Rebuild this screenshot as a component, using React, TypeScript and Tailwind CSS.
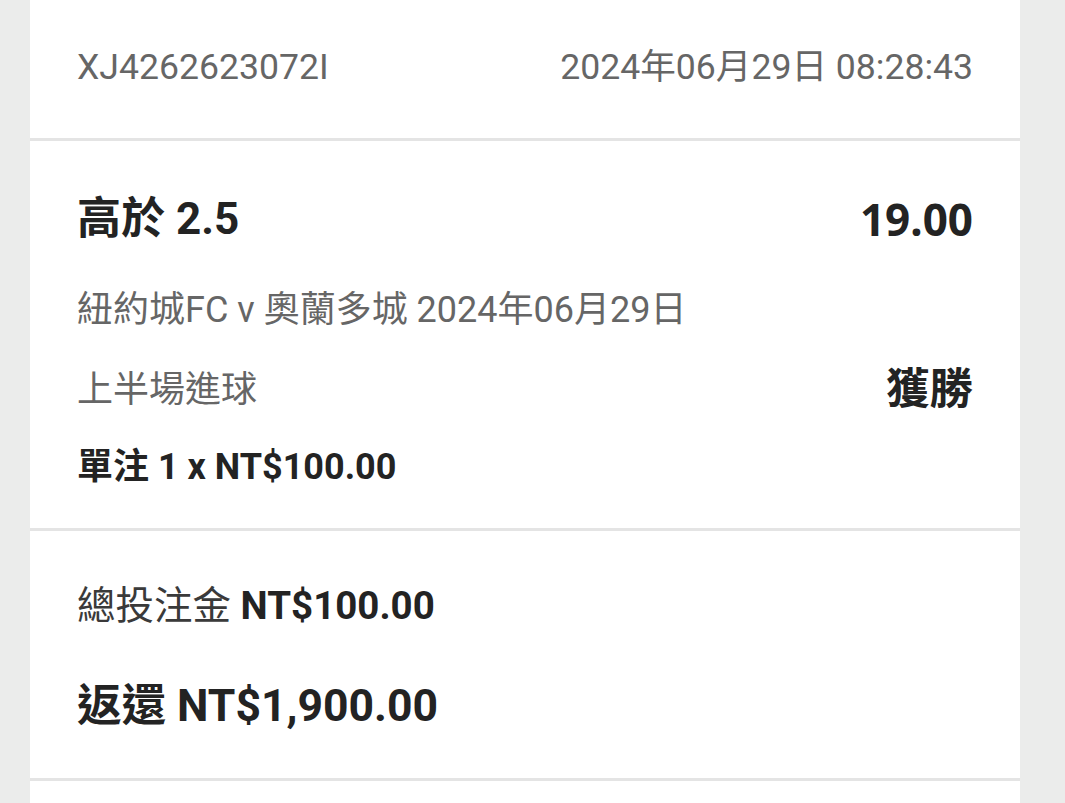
import React from "react";

const font = { fontFamily: "Roboto, 'Noto Sans CJK TC', sans-serif" };

function Divider() {
  return <div className="h-[3px] bg-[#e4e4e4]" />;
}

export default function App() {
  return (
    <div className="min-h-[803px] bg-[#ebeceb] px-[30px] pr-[45px]" style={font}>
      <div className="bg-white w-[990px]">
        <div className="flex items-center justify-between h-[138px] px-[47px] pb-[2px] text-[35.6px] text-[#666666]">
          <span>XJ4262623072I</span>
          <span>2024年06月29日 08:28:43</span>
        </div>
        <Divider />
        <div className="px-[47px] pt-[35px] pb-[20px]">
          <div className="flex items-center justify-between h-[86px]">
            <span className="text-[44px] font-bold text-[#232323]">高於 2.5</span>
            <span
              className="text-[44px] font-bold text-[#232323]"
              style={{ fontFamily: "'Noto Sans', 'Open Sans', sans-serif" }}
            >
              19.00
            </span>
          </div>
          <div className="flex items-center h-[92px] pt-[4px] text-[36px] text-[#666666]">
            紐約城FC v 奧蘭多城 2024年06月29日
          </div>
          <div className="flex items-center justify-between h-[72px]">
            <span className="text-[36px] text-[#666666]">上半場進球</span>
            <span className="text-[43.5px] font-bold text-[#232323]">獲勝</span>
          </div>
          <div className="flex items-center h-[82px] text-[36px] font-bold text-[#232323]">
            單注 1 x NT$100.00
          </div>
        </div>
        <Divider />
        <div className="px-[47px] pt-[35px] pb-[12px]">
          <div className="flex items-center h-[80px] text-[38.5px] text-[#3a3a3a]">
            <span>總投注金&nbsp;</span>
            <span className="font-bold text-[#232323]">NT$100.00</span>
          </div>
          <div className="flex items-center h-[120px] text-[44.5px] font-bold text-[#232323]">
            返還 NT$1,900.00
          </div>
        </div>
        <Divider />
        <div className="h-[40px]" />
      </div>
    </div>
  );
}
